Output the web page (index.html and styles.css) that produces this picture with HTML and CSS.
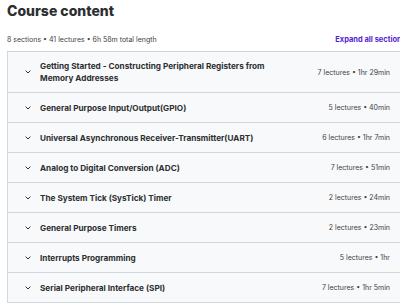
FILE: index.html
```
<!DOCTYPE html>
<html lang="en">
<head>
    <meta charset="UTF-8">
    <title>Course content</title>
    <link rel="stylesheet" href="styles.css">
</head>
<body>
    <div class="course">
        <h2 class="course-title">Course content</h2>

        <div class="course-head">
            <span class="course-stats">8 sections • 41 lectures • 6h 58m total length</span>
            <button class="expand-btn">Expand all sections</button>
        </div>

        <div class="sections">
            <div class="section tall">
                <span class="chevron"><svg width="6" height="4" viewBox="0 0 6 4"><path d="M0.6 0.6 L3 3 L5.4 0.6" fill="none" stroke="#2d2f31" stroke-width="1"/></svg></span>
                <span class="section-name">Getting Started - Constructing Peripheral Registers from Memory Addresses</span>
                <span class="section-meta">7 lectures • 1hr 29min</span>
            </div>
            <div class="section">
                <span class="chevron"><svg width="6" height="4" viewBox="0 0 6 4"><path d="M0.6 0.6 L3 3 L5.4 0.6" fill="none" stroke="#2d2f31" stroke-width="1"/></svg></span>
                <span class="section-name">General Purpose Input/Output(GPIO)</span>
                <span class="section-meta">5 lectures • 40min</span>
            </div>
            <div class="section">
                <span class="chevron"><svg width="6" height="4" viewBox="0 0 6 4"><path d="M0.6 0.6 L3 3 L5.4 0.6" fill="none" stroke="#2d2f31" stroke-width="1"/></svg></span>
                <span class="section-name">Universal Asynchronous Receiver-Transmitter(UART)</span>
                <span class="section-meta">6 lectures • 1hr 7min</span>
            </div>
            <div class="section">
                <span class="chevron"><svg width="6" height="4" viewBox="0 0 6 4"><path d="M0.6 0.6 L3 3 L5.4 0.6" fill="none" stroke="#2d2f31" stroke-width="1"/></svg></span>
                <span class="section-name">Analog to Digital Conversion (ADC)</span>
                <span class="section-meta">7 lectures • 51min</span>
            </div>
            <div class="section">
                <span class="chevron"><svg width="6" height="4" viewBox="0 0 6 4"><path d="M0.6 0.6 L3 3 L5.4 0.6" fill="none" stroke="#2d2f31" stroke-width="1"/></svg></span>
                <span class="section-name">The System Tick (SysTick) Timer</span>
                <span class="section-meta">2 lectures • 24min</span>
            </div>
            <div class="section">
                <span class="chevron"><svg width="6" height="4" viewBox="0 0 6 4"><path d="M0.6 0.6 L3 3 L5.4 0.6" fill="none" stroke="#2d2f31" stroke-width="1"/></svg></span>
                <span class="section-name">General Purpose Timers</span>
                <span class="section-meta">2 lectures • 23min</span>
            </div>
            <div class="section">
                <span class="chevron"><svg width="6" height="4" viewBox="0 0 6 4"><path d="M0.6 0.6 L3 3 L5.4 0.6" fill="none" stroke="#2d2f31" stroke-width="1"/></svg></span>
                <span class="section-name">Interrupts Programming</span>
                <span class="section-meta">5 lectures • 1hr</span>
            </div>
            <div class="section">
                <span class="chevron"><svg width="6" height="4" viewBox="0 0 6 4"><path d="M0.6 0.6 L3 3 L5.4 0.6" fill="none" stroke="#2d2f31" stroke-width="1"/></svg></span>
                <span class="section-name">Serial Peripheral Interface (SPI)</span>
                <span class="section-meta">7 lectures • 1hr 5min</span>
            </div>
        </div>
    </div>
</body>
</html>
```

FILE: styles.css
```
/* General */
body, html {
    margin: 0;
    padding: 0;
    background-color: #fff;
    color: #2d2f31;
    font-family: Inter, "Open Sans", sans-serif;
    overflow: hidden;
}

.course {
    width: 399px;
    padding-left: 7px;
}

.course-title {
    margin: 0;
    padding-top: 1px;
    font-size: 14px;
    line-height: 20px;
    font-weight: 800;
}

/* Stats line */
.course-head {
    display: flex;
    justify-content: space-between;
    align-items: flex-end;
    margin-top: 7px;
    height: 16px;
    padding-bottom: 7px;
}

.course-stats {
    font-size: 7px;
    color: #3e4143;
}

.expand-btn {
    background: none;
    border: none;
    padding: 0;
    font-family: inherit;
    font-size: 7.5px;
    font-weight: 700;
    color: #5624d0;
    cursor: pointer;
}

/* Sections */
.sections {
    border: 1px solid #d1d7dc;
    border-right: none;
}

.section {
    display: flex;
    align-items: center;
    height: 29px;
    padding: 0 16px 0 17px;
    background-color: #f7f9fa;
    border-bottom: 1px solid #d1d7dc;
}

.section:last-child {
    border-bottom: none;
}

.section.tall {
    height: 40px;
}

.chevron {
    display: flex;
    width: 15px;
    flex-shrink: 0;
}

.section-name {
    flex: 1;
    font-size: 8.2px;
    line-height: 12px;
    font-weight: 700;
    padding-right: 30px;
}

.section-meta {
    font-size: 7px;
    color: #3e4143;
    white-space: nowrap;
}
```
